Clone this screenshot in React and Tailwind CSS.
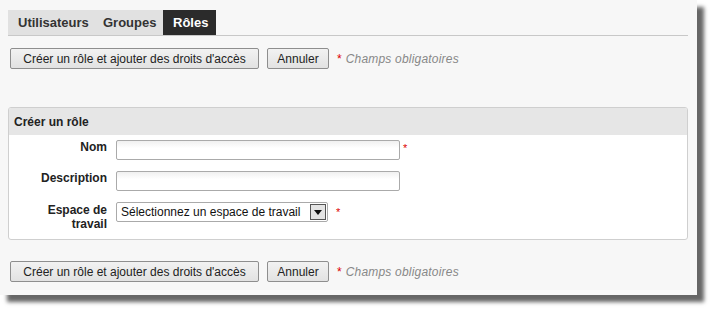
export default function App() {
    const btn = "h-[21px] px-[9px] border border-[#8e8e8e] rounded-[2px] bg-gradient-to-b from-[#f2f2f2] to-[#e2e2e2] text-[12px] text-[#222] leading-none";

    const Actions = () => (
        <div className="flex items-center">
            <button className={btn + " w-[249px]"}>Créer un rôle et ajouter des droits d'accès</button>
            <button className={btn + " ml-[8px] w-[62px]"}>Annuler</button>
            <span className="ml-[8px] text-[12px] text-[#d00]">*</span>
            <span className="ml-[4px] text-[12px] italic text-[#888] tracking-[0.2px]">Champs obligatoires</span>
        </div>
    );

    return (
        <div className="w-[713px] h-[310px] bg-white font-['Liberation_Sans',Arial,sans-serif]">
            <div className="w-[697px] h-[295px] bg-[#f7f7f7] shadow-[7px_7px_4px_rgba(0,0,0,0.6)] pt-[10px] px-[8px]">
                <div className="flex border-b border-[#c8c8c8] w-[680px]">
                    <div className="flex bg-[#e1e1e1] text-[13px] font-bold text-[#333]">
                        <div className="h-[25px] px-[10px] flex items-center w-[84px]">Utilisateurs</div>
                        <div className="h-[25px] px-[11px] flex items-center w-[71px]">Groupes</div>
                        <div className="h-[25px] px-[10px] flex items-center bg-[#2b2b2b] text-white w-[53px]">Rôles</div>
                    </div>
                </div>

                <div className="mt-[12px] pl-[2px]">
                    <Actions />
                </div>

                <div className="mt-[38px] w-[680px] h-[133px] border border-[#cfcfcf] rounded-[3px] bg-white overflow-hidden">
                    <div className="h-[27px] bg-[#e6e6e6] flex items-center px-[5px] text-[12px] font-bold text-[#222]">Créer un rôle</div>
                    <div className="pt-[5px] text-[12px] text-[#222]">
                        <div className="flex items-start h-[31px]">
                            <div className="w-[98px] text-right font-bold leading-[14px]">Nom</div>
                            <div className="ml-[9px] w-[284px] h-[20px] border border-[#aaa] rounded-[2px] bg-gradient-to-b from-[#f0f0f0] to-white to-[40%]"></div>
                            <span className="ml-[3px] text-[#d00] leading-none text-[11px] pt-[3px]">*</span>
                        </div>
                        <div className="flex items-start h-[31px]">
                            <div className="w-[98px] text-right font-bold leading-[14px]">Description</div>
                            <div className="ml-[9px] w-[284px] h-[20px] border border-[#aaa] rounded-[2px] bg-gradient-to-b from-[#f0f0f0] to-white to-[40%]"></div>
                        </div>
                        <div className="flex items-start">
                            <div className="w-[98px] text-right font-bold leading-[14px] pt-[1px]">Espace de<br />travail</div>
                            <div className="ml-[9px] w-[212px] h-[20px] border border-[#aaa] rounded-[2px] bg-white flex items-center pl-[4px] pr-[1px]">
                                <span className="flex-1 text-[12px] text-[#111]">Sélectionnez un espace de travail</span>
                                <div className="w-[16px] h-[16px] border border-[#555] bg-[#e4e4e4] flex items-center justify-center">
                                    <svg width="8" height="5" viewBox="0 0 8 5"><path d="M0 0h8L4 5z" fill="#111" /></svg>
                                </div>
                            </div>
                            <span className="ml-[8px] text-[#d00] leading-none text-[11px] pt-[5px]">*</span>
                        </div>
                    </div>
                </div>

                <div className="mt-[21px] pl-[2px]">
                    <Actions />
                </div>
            </div>
        </div>
    );
}
